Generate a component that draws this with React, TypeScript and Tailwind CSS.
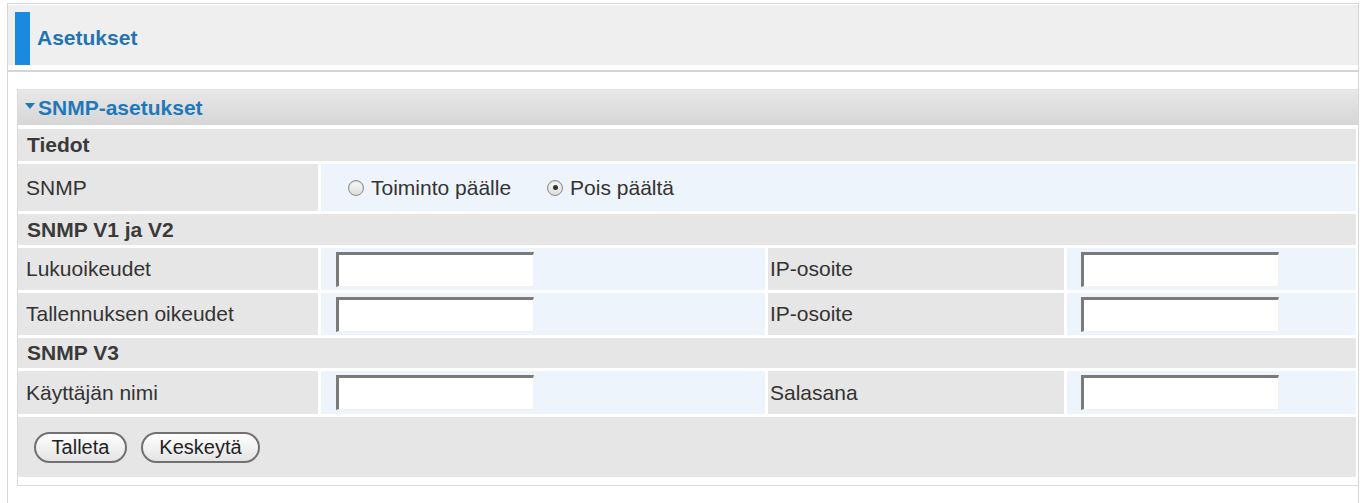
import React from "react";

const font = { fontFamily: '"Liberation Sans", Arial, Helvetica, sans-serif' };

const TextInput: React.FC = () => (
  <input
    type="text"
    className="h-[35px] w-[198px] border-t-[3px] border-l-[3px] border-r border-b border-t-[#7b7b7b] border-l-[#7b7b7b] border-r-[#f1f1f1] border-b-[#f1f1f1] bg-white outline-none"
  />
);

const Radio: React.FC<{ checked?: boolean; label: string }> = ({ checked, label }) => (
  <label className="flex items-center gap-[7px]">
    <span className="flex h-[16px] w-[16px] items-center justify-center rounded-full border border-[#8a8a8a] bg-gradient-to-b from-[#fafafa] to-[#dcdcdc] shadow-[inset_0_1px_1px_rgba(0,0,0,0.15)]">
      {checked && <span className="h-[5px] w-[5px] rounded-full bg-[#333]" />}
    </span>
    <span>{label}</span>
  </label>
);

const GroupRow: React.FC<{ title: string; h: string }> = ({ title, h }) => (
  <div className={`flex items-center bg-[#e6e6e6] pl-[9px] font-bold text-[#3a3a3a] ${h}`}>
    {title}
  </div>
);

const FieldRow: React.FC<{ left: string; right: string; h: string }> = ({ left, right, h }) => (
  <div className={`flex gap-[3px] ${h}`}>
    <div className="flex w-[300px] items-center bg-[#e6e6e6] pl-[8px]">{left}</div>
    <div className="flex w-[444px] items-center bg-[#eef4fb] pl-[15px]">
      <TextInput />
    </div>
    <div className="flex w-[296px] items-center bg-[#e6e6e6] pl-[2px]">{right}</div>
    <div className="flex flex-1 items-center bg-[#eef4fb] pl-[14px]">
      <TextInput />
    </div>
  </div>
);

const PillButton: React.FC<{ children: React.ReactNode; w: string }> = ({ children, w }) => (
  <button
    className={`flex h-[31px] items-center justify-center rounded-full border-2 border-[#707070] bg-gradient-to-b from-white to-[#e4e4e4] text-[20px] text-[#222] ${w}`}
  >
    {children}
  </button>
);

export default function App() {
  return (
    <div className="h-[503px] w-[1362px] overflow-hidden bg-white text-[21px] text-[#333]" style={font}>
      <div className="ml-[7px] mt-[3px] h-[500px] w-[1352px] border-l border-t border-r border-[#d6d6d6]">
        {/* page title */}
        <div className="border-b-2 border-[#d4d4d4] pb-[5px] pt-[1px]">
          <div className="flex h-[60px] items-center bg-[#efefef]">
            <div className="ml-[7px] h-[53px] w-[15px] self-end bg-[#1a8ae0]" />
            <span className="ml-[7px] mt-[6px] font-bold text-[#1f74b6]">Asetukset</span>
          </div>
        </div>

        <div className="ml-[9px] mt-[17px] w-[1341px] border-b border-l border-[#dadada] pb-[8px]">
          <div className="flex h-[36px] items-center border-t border-[#dbe5ee] bg-gradient-to-b from-[#e8e8e8] to-[#d6d6d6] pl-[7px] font-bold text-[#1f78bb]">
            <svg width="10" height="6" viewBox="0 0 10 6" className="mr-[3px] mb-[4px]">
              <path d="M0 0 L10 0 L5 6 Z" fill="#1f78bb" />
            </svg>
            SNMP-asetukset
          </div>

          <div className="mt-[4px] flex flex-col gap-[3px] pr-[2px]">
            <GroupRow title="Tiedot" h="h-[32px]" />
            <div className="flex h-[47px] gap-[3px]">
              <div className="flex w-[300px] items-center bg-[#e6e6e6] pl-[8px]">SNMP</div>
              <div className="flex flex-1 items-center gap-[36px] bg-[#eef4fb] pl-[27px]">
                <Radio label="Toiminto päälle" />
                <Radio label="Pois päältä" checked />
              </div>
            </div>
            <GroupRow title="SNMP V1 ja V2" h="h-[31px]" />
            <FieldRow left="Lukuoikeudet" right="IP-osoite" h="h-[42px]" />
            <FieldRow left="Tallennuksen oikeudet" right="IP-osoite" h="h-[42px]" />
            <GroupRow title="SNMP V3" h="h-[30px]" />
            <FieldRow left="Käyttäjän nimi" right="Salasana" h="h-[43px]" />
            <div className="flex h-[60px] items-center gap-[14px] bg-[#e6e6e6] pl-[16px]">
              <PillButton w="w-[93px]">Talleta</PillButton>
              <PillButton w="w-[119px]">Keskeytä</PillButton>
            </div>
          </div>
        </div>
      </div>
    </div>
  );
}
